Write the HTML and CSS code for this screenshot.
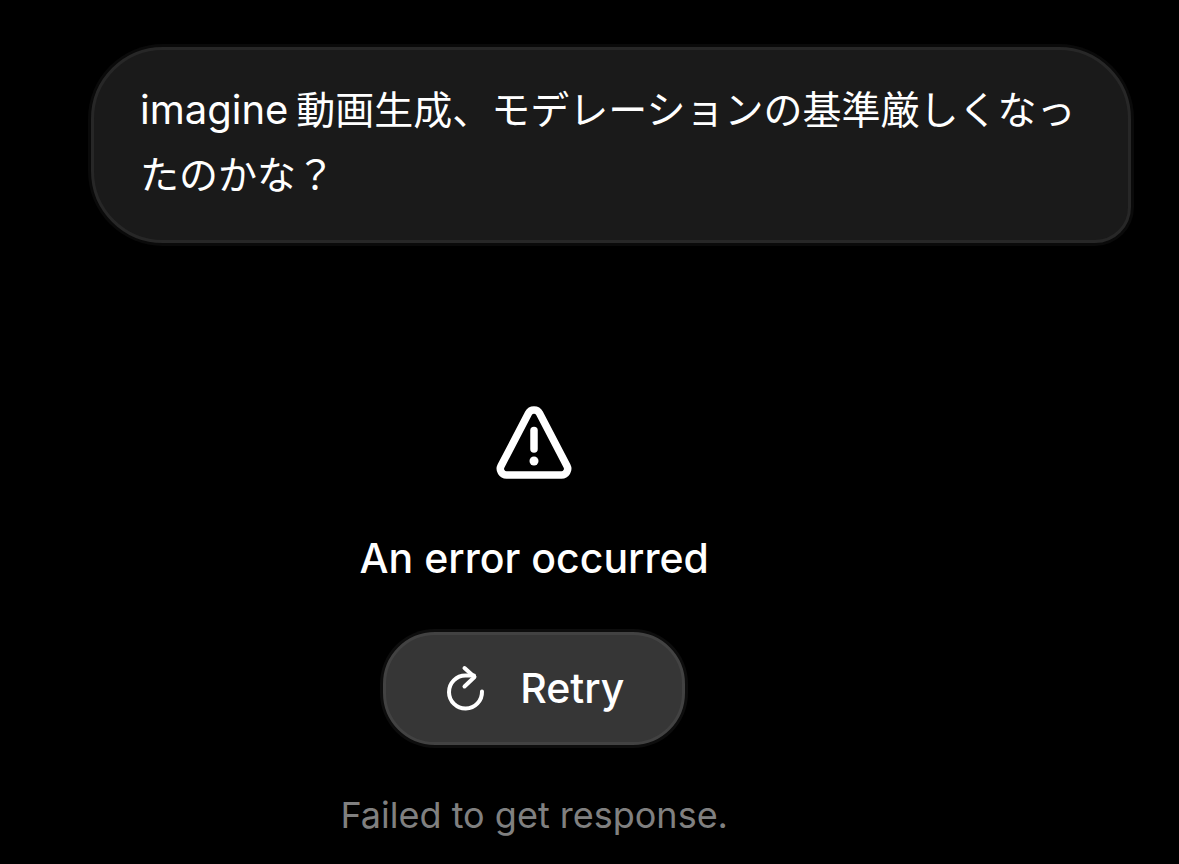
FILE: index.html
```html
<!DOCTYPE html>
<html lang="ja">
<head>
    <meta charset="utf-8">
    <meta name="viewport" content="width=device-width, initial-scale=1">
    <title>Chat</title>
    <link rel="stylesheet" href="styles.css">
</head>
<body>
    <main class="chat">
        <p class="message"><span class="latin">imagine</span><span>動画生成、モデレーションの基準厳しくなったのかな？</span></p>

        <section class="error" lang="en">
            <svg class="warning-icon" viewBox="0 0 80 80" fill="none" stroke="white" stroke-linecap="round" stroke-linejoin="round" aria-hidden="true">
                <path stroke-width="7.500" d="M34.500 11.300 A6.200 6.200 0 0 1 45.500 11.300 L73 64 A6.200 6.200 0 0 1 67.500 73 H12.500 A6.200 6.200 0 0 1 7 64 Z"/>
                <path stroke-width="7.500" d="M40 28.500 V47"/>
                <circle cx="40" cy="59" r="4.500" fill="white" stroke="none"/>
            </svg>
            <h1 class="error-title">An error occurred</h1>
            <button class="retry-button" type="button">
                <svg class="retry-icon" viewBox="0 0 44 50" fill="none" stroke="white" stroke-width="4" stroke-linecap="round" stroke-linejoin="round" aria-hidden="true">
                    <path d="M38 27.500 A16.500 16.500 0 1 1 21.500 11.500 H30"/>
                    <path d="M20.500 4 L30.500 13 L20.500 22.500"/>
                </svg>
                Retry
            </button>
            <p class="error-detail">Failed to get response.</p>
        </section>
    </main>
</body>
</html>
```
FILE: styles.css
```css
body {
    margin: 0;
    background-color: #000;
    color: #fff;
    font-family: Inter, "Noto Sans CJK JP", sans-serif;
}

.chat {
    display: flex;
    flex-direction: column;
    padding: 47px 48px 24px 46px;
}

.message {
    margin: 0 0 0 45px;
    padding: 27px 46px 33px;
    border: 3px solid #272727;
    border-radius: 72px 72px 36px 72px;
    background-color: #1a1a1a;
    box-shadow: 0 0 0 3px #0a0a0a;
    font-size: 39px;
    line-height: 65px;
}

.latin {
    margin-right: 8px;
    font-size: 40px;
}

.error {
    display: flex;
    flex-direction: column;
    align-items: center;
    width: 90%;
    margin-top: 159px;
}

.warning-icon {
    width: 80px;
    height: 80px;
}

.error-title {
    margin: 48px 0 46px;
    font-size: 41px;
    font-weight: 500;
    line-height: 56px;
}

.retry-button {
    display: flex;
    align-items: center;
    gap: 32px;
    padding: 28px 58px;
    border: 3px solid #424242;
    border-radius: 52px;
    background-color: #363636;
    box-shadow: 0 0 0 3px #0d0d0d;
    color: #fff;
    font-family: inherit;
    font-size: 41px;
    font-weight: 500;
    line-height: 51px;
    cursor: pointer;
}

.retry-icon {
    width: 44px;
    height: 50px;
}

.error-detail {
    margin: 44px 0 0;
    color: #808080;
    font-size: 36px;
    line-height: 52px;
}
```
